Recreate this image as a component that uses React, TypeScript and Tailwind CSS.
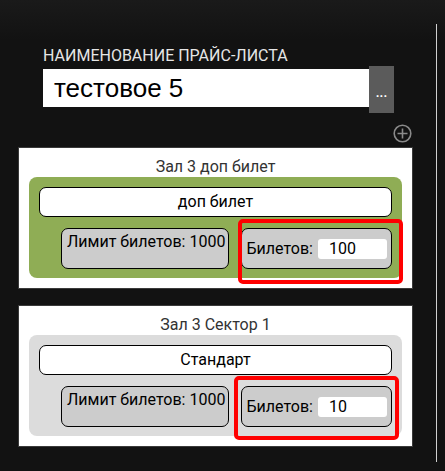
import React from 'react';

interface Sector {
  hall: string;
  name: string;
  limit: number;
  tickets: number;
  panel: string;
  mark: string;
}

const sectors: Sector[] = [
  {
    hall: 'Зал 3 доп билет',
    name: 'доп билет',
    limit: 1000,
    tickets: 100,
    panel: 'bg-[#8fad55]',
    mark: 'left-[219px] top-[71px] h-[65px]'
  },
  {
    hall: 'Зал 3 Сектор 1',
    name: 'Стандарт',
    limit: 1000,
    tickets: 10,
    panel: 'bg-[#dcdcdc]',
    mark: 'left-[215px] top-[70px] h-[64px]'
  }
];

function SectorCard({ sector }: { sector: Sector }) {
  return (
    <div className="relative h-[142px] w-[395px] border border-[#3a3a3a] bg-white pt-[9px] font-['Roboto',sans-serif]">
      <div className="text-center text-[16px] leading-[20px] text-[#333]">{sector.hall}</div>
      <div className={`mx-[10px] h-[101px] rounded-[8px] px-[10px] pt-[10px] ${sector.panel}`}>
        <div className="flex h-[30px] items-center justify-center rounded-[7px] border border-black bg-white text-[16px] text-black">
          {sector.name}
        </div>
        <div className="mt-[11px] flex gap-[12px] pl-[22px]">
          <div className="h-[41px] w-[169px] whitespace-nowrap rounded-[7px] border border-black bg-[#cccccc] pl-[5px] pt-[3px] text-[16px] leading-[20px] text-black">
            Лимит билетов: {sector.limit}
          </div>
          <div className="flex h-[41px] w-[151px] items-center rounded-[7px] border border-black bg-[#cccccc] pl-[4px] text-[16px] text-black">
            <span>Билетов:</span>
            <div className="ml-[5px] flex h-[20px] w-[69px] items-center rounded-[3px] bg-white pl-[11px] leading-none">
              {sector.tickets}
            </div>
          </div>
        </div>
      </div>
      <div className={`pointer-events-none absolute w-[165px] rounded-[5px] border-[4px] border-[#ff0000] ${sector.mark}`} />
    </div>);

}

export default function App() {
  return (
    <div className="flex h-[471px] w-[445px] bg-[linear-gradient(to_bottom,#1a1a1a_0px,#121212_40px,#121212_100%)]">
      <div className="w-[436px] pl-[18px] pt-[46px]">
        <div className="pl-[25px] font-['Roboto',sans-serif] text-[16px] leading-[19px] text-[#e6e6e6]">
          НАИМЕНОВАНИЕ ПРАЙС-ЛИСТА
        </div>
        <div className="mt-[4px] flex items-start pl-[25px]">
          <div className="flex h-[38px] w-[326px] items-center bg-white pl-[11px] font-['Liberation_Sans',Arial,sans-serif] text-[26px] text-black">
            тестовое 5
          </div>
          <button className="-mt-[3px] flex h-[47px] w-[25px] items-center justify-center bg-[#5b5b5b] pt-[7px] font-['Roboto',sans-serif] text-[13px] font-bold text-white">
            ...
          </button>
        </div>
        <div className="mt-[11px] flex w-[395px] justify-end pr-[1px]">
          <svg width="19" height="19" viewBox="0 0 19 19" fill="none" stroke="#8a8a8a" strokeWidth="1.6">
            <circle cx="9.5" cy="9.5" r="8.3" />
            <path d="M9.5 4.5v10M4.5 9.5h10" />
          </svg>
        </div>
        <div className="mt-[4px] flex flex-col gap-[16px]">
          {sectors.map((s) =>
          <SectorCard key={s.hall} sector={s} />
          )}
        </div>
      </div>
      <div className="mt-[24px] h-[438px] w-px bg-[#d0d0d0]" />
    </div>);

}
